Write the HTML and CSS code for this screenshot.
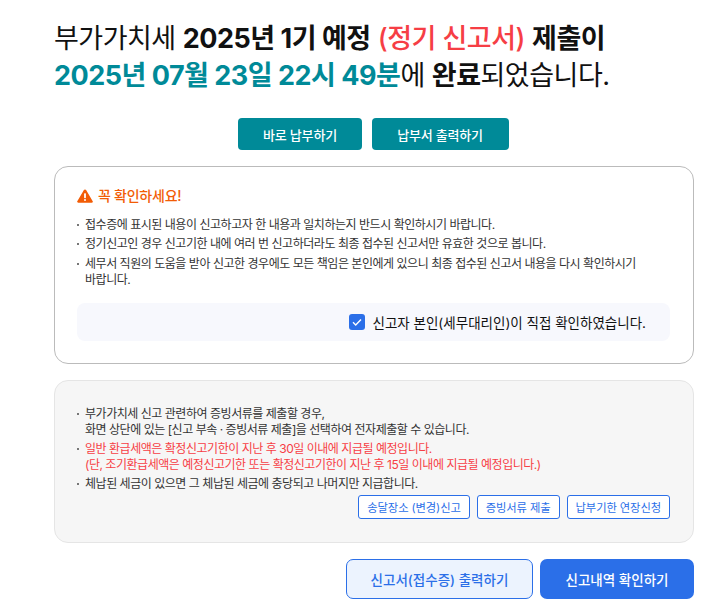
FILE: index.html
```html
<!DOCTYPE html>
<html lang="ko">
<head>
<meta charset="utf-8">
<title>신고서 제출 완료</title>
<link rel="stylesheet" href="styles.css">
</head>
<body>
<main class="page">
  <h1 class="title">부가가치세 <b>2025년 1기 예정</b> <b class="red">(정기 신고서)</b> <b>제출이</b><br><b class="teal">2025년 07월 23일 22시 49분</b>에 <b>완료</b>되었습니다.</h1>
  <div class="pay-actions">
    <button class="btn-teal pay">바로 납부하기</button>
    <button class="btn-teal print">납부서 출력하기</button>
  </div>
  <section class="card notice">
    <h2 class="warn">
      <svg class="warn-icon" viewBox="0 0 16 14" width="16" height="14" aria-hidden="true"><path d="M8 0.4c.5 0 .9.3 1.1.7l6.6 11.2c.5.8-.1 1.5-1 1.5H1.3c-.9 0-1.5-.7-1-1.5L6.9 1.1C7.1.7 7.5.4 8 .4z" fill="#f25c05"/><rect x="7.1" y="4.2" width="1.8" height="5" rx=".6" fill="#fff"/><circle cx="8" cy="11" r="1" fill="#fff"/></svg>
      꼭 확인하세요!
    </h2>
    <ul class="list">
      <li>접수증에 표시된 내용이 신고하고자 한 내용과 일치하는지 반드시 확인하시기 바랍니다.</li>
      <li>정기신고인 경우 신고기한 내에 여러 번 신고하더라도 최종 접수된 신고서만 유효한 것으로 봅니다.</li>
      <li>세무서 직원의 도움을 받아 신고한 경우에도 모든 책임은 본인에게 있으니 최종 접수된 신고서 내용을 다시 확인하시기 바랍니다.</li>
    </ul>
    <div class="confirm">
      <span class="check"><svg viewBox="0 0 16 16" width="16" height="16" aria-hidden="true"><rect width="16" height="16" rx="3" fill="#2b6fe8"/><path d="M4 8.3l2.7 2.6L12 5.4" fill="none" stroke="#fff" stroke-width="1.4"/></svg></span>
      <span>신고자 본인(세무대리인)이 직접 확인하였습니다.</span>
    </div>
  </section>
  <section class="card info">
    <ul class="list">
      <li>부가가치세 신고 관련하여 증빙서류를 제출할 경우,<br>화면 상단에 있는 [신고 부속 · 증빙서류 제출]을 선택하여 전자제출할 수 있습니다.</li>
      <li class="alert">일반 환급세액은 확정신고기한이 지난 후 30일 이내에 지급될 예정입니다.<br>(단, 조기환급세액은 예정신고기한 또는 확정신고기한이 지난 후 15일 이내에 지급될 예정입니다.)</li>
      <li>체납된 세금이 있으면 그 체납된 세금에 충당되고 나머지만 지급합니다.</li>
    </ul>
    <div class="links">
      <button class="btn-line">송달장소 (변경)신고</button>
      <button class="btn-line">증빙서류 제출</button>
      <button class="btn-line">납부기한 연장신청</button>
    </div>
  </section>
  <div class="bottom">
    <button class="btn-big ghost">신고서(접수증) 출력하기</button>
    <button class="btn-big solid">신고내역 확인하기</button>
  </div>
</main>
</body>
</html>
```
FILE: styles.css
```css
* { box-sizing: border-box; }
html, body { margin: 0; padding: 0; background: #fff; }
body { font-family: Inter, "Noto Sans CJK KR", sans-serif; color: #222; }
button { font-family: inherit; cursor: pointer; padding: 0; }
.page { width: 640px; margin-left: 54px; padding-top: 20px; }
.title { margin: 0; font-size: 27px; line-height: 37px; font-weight: 400; color: #111; letter-spacing: -0.5px; }
.title b { font-weight: 700; }
.title .red { color: #f63e45; font-weight: 500; }
.title .teal { color: #008a98; }
.pay-actions { display: flex; justify-content: center; gap: 10px; margin-top: 24px; margin-left: -2px; }
.btn-teal { height: 32px; background: #008a98; color: #fff; border: 0; border-radius: 4px; font-size: 13px; font-weight: 500; letter-spacing: -0.2px; }
.pay { width: 124px; padding-left: 1px; }
.print { width: 137px; }
.card { border-radius: 14px; }
.notice { margin-top: 16px; height: 198px; border: 1px solid #bbb; padding: 19px 23px 0 22px; }
.warn { margin: 0; display: flex; align-items: center; gap: 5px; font-size: 14px; line-height: 20px; font-weight: 500; color: #f25c05; letter-spacing: -0.25px; }
.warn-icon { flex: none; }
.list { list-style: none; margin: 0; padding: 0; font-size: 12px; line-height: 16px; color: #333; letter-spacing: -0.47px; }
.list li { position: relative; padding-left: 8px; margin-bottom: 3px; }
.list li::before { content: ""; position: absolute; left: 0; top: 7px; width: 2px; height: 2px; background: #777; }
.notice .list { margin-top: 11px; padding-right: 29px; }
.notice .list li:nth-child(3) { margin-top: 4px; }
.confirm { margin-top: 15px; height: 38px; background: #f7f8fd; border-radius: 8px; display: flex; align-items: center; justify-content: flex-end; padding-right: 24px; gap: 7px; font-size: 13.5px; font-weight: 400; color: #111; }
.check { display: flex; }
.info { margin-top: 16px; height: 163px; background: #f6f6f6; border: 1px solid #e5e5e5; padding: 25px 23px 0 22px; }
.info .list li { margin-bottom: 3px; }
.info .alert { color: #f63e45; }
.links { display: flex; justify-content: flex-end; gap: 7px; margin-top: 2px; }
.btn-line { height: 24px; padding: 0 8px; background: #fff; border: 1px solid #2b6fe8; border-radius: 3px; color: #2b6fe8; font-size: 11.3px; letter-spacing: -0.1px; }
.bottom { display: flex; justify-content: flex-end; gap: 7px; margin-top: 16px; }
.btn-big { height: 40px; border-radius: 7px; font-size: 13.5px; font-weight: 500; }
.ghost { width: 187px; background: #ecf3fe; border: 1px solid #2b6fe8; color: #2b6fe8; }
.solid { width: 154px; background: #2b6fe8; border: 0; color: #fff; }
```
